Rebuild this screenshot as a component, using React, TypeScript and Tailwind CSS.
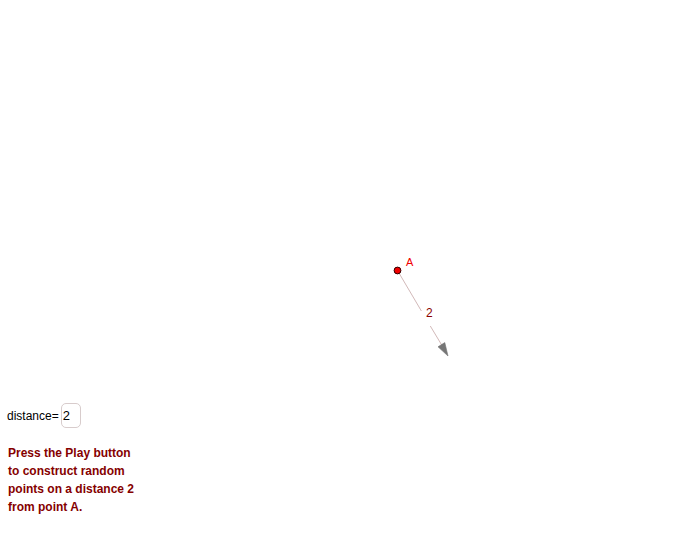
export default function App() {
  return (
    <div className="relative w-[691px] h-[550px] bg-white overflow-hidden font-['Liberation_Sans',Arial,sans-serif]">
      {/* graphics view */}
      <svg className="absolute inset-0" width="691" height="550" viewBox="0 0 691 550">
        <line x1="397.5" y1="270.5" x2="421.4" y2="311" stroke="#d2b9b9" strokeWidth="1" />
        <line x1="430.3" y1="326" x2="442" y2="345.5" stroke="#d2b9b9" strokeWidth="1" />
        <polygon points="448,356 438,346.8 444.8,342.6" fill="#767676" stroke="#767676" strokeWidth="0.6" />
        <text x="426" y="317" fontSize="12" fill="#8b0000" fontFamily="Liberation Sans, Arial, sans-serif">2</text>
        <circle cx="397.5" cy="270.5" r="3.4" fill="#f00000" stroke="#300000" strokeWidth="1" />
        <text x="406" y="265.5" fontSize="11" fill="#f00000" fontFamily="Liberation Sans, Arial, sans-serif">A</text>
      </svg>

      {/* input box */}
      <div className="absolute left-[7px] top-[403px] flex items-center gap-[2px] text-[12px] text-black">
        <span>distance=</span>
        <div className="w-[20px] h-[25px] border border-[#d8cccc] rounded-[5px] flex items-center pl-[1px] text-[13px]">2</div>
      </div>

      {/* caption */}
      <div className="absolute left-[8px] top-[444px] text-[12px] leading-[18px] font-bold text-[#850000]">
        <p>Press the Play button</p>
        <p>to construct random</p>
        <p>points on a distance 2</p>
        <p>from point A.</p>
      </div>
    </div>
  );
}
